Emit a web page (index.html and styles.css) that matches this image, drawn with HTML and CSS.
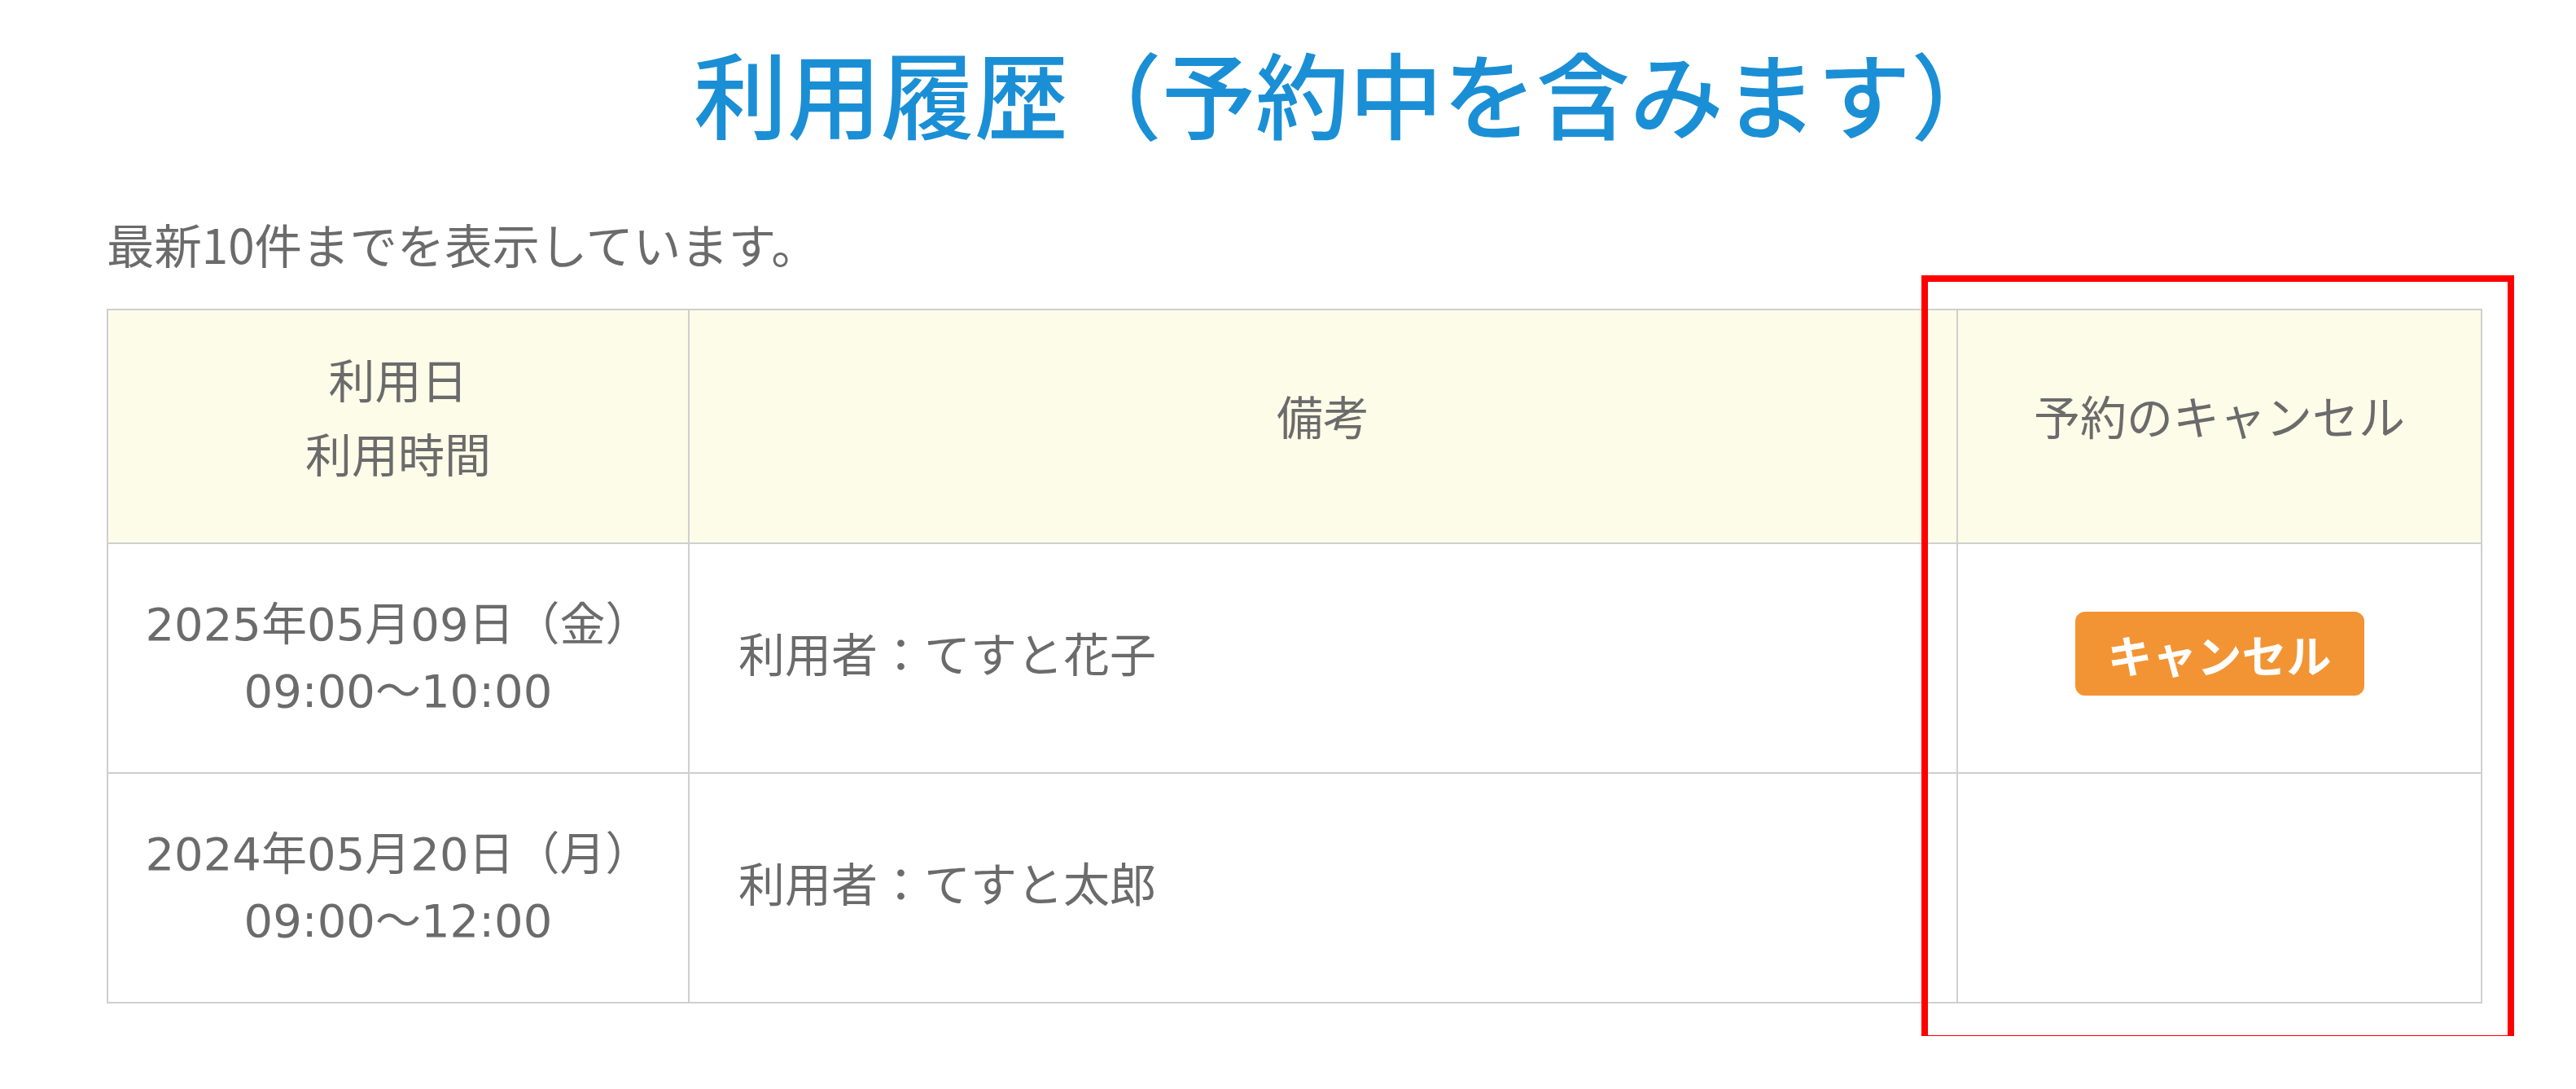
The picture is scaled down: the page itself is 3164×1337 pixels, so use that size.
FILE: index.html
```html
<!DOCTYPE html>
<html lang="ja">
<head>
<meta charset="utf-8">
<title>利用履歴</title>
<link rel="stylesheet" href="styles.css">
</head>
<body>
<div class="page">
  <h1 class="title">利用履歴（予約中を含みます）</h1>
  <p class="note">最新10件までを表示しています。</p>
  <table class="history">
    <colgroup>
      <col class="c-date">
      <col class="c-memo">
      <col class="c-cancel">
    </colgroup>
    <thead>
      <tr class="head-row">
        <th>利用日<br>利用時間</th>
        <th>備考</th>
        <th>予約のキャンセル</th>
      </tr>
    </thead>
    <tbody>
      <tr class="body-row">
        <td class="date">2025年05月09日（金）<br>09:00〜10:00</td>
        <td class="memo">利用者：てすと花子</td>
        <td class="cancel"><button class="cancel-btn" type="button">キャンセル</button></td>
      </tr>
      <tr class="body-row">
        <td class="date">2024年05月20日（月）<br>09:00〜12:00</td>
        <td class="memo">利用者：てすと太郎</td>
        <td class="cancel"></td>
      </tr>
    </tbody>
  </table>
  <div class="highlight"></div>
</div>
</body>
</html>
```

FILE: styles.css
```css
html, body {
  margin: 0;
  padding: 0;
  background: #ffffff;
}

body {
  font-family: "Noto Sans CJK JP", "Noto Sans", sans-serif;
  color: #6b6b6b;
}

.page {
  position: relative;
  padding: 46px 117px 40px 131px;
}

.title {
  margin: 0;
  font-size: 115px;
  line-height: 132px;
  font-weight: 500;
  color: #1b8fd5;
  text-align: center;
  padding-left: 136px;
}

.note {
  margin: 80px 0 0;
  font-size: 58.4px;
  line-height: 82px;
}

.history {
  margin-top: 39px;
  width: 2916px;
  border-collapse: collapse;
  table-layout: fixed;
  font-size: 57px;
}

.c-date { width: 714px; }
.c-memo { width: 1558px; }
.c-cancel { width: 644px; }

.history th,
.history td {
  border: 2px solid #cfcfcf;
  padding: 0;
  vertical-align: middle;
}

.history th {
  background: #fdfce9;
  font-weight: normal;
  line-height: 91px;
  text-align: center;
  padding-bottom: 28px;
}

.head-row { height: 287px; }
.body-row { height: 282px; }

.history td {
  line-height: 82px;
  padding-bottom: 12px;
}

.history td.date {
  text-align: center;
  font-family: "DejaVu Sans", "Noto Sans CJK JP", sans-serif;
  font-size: 56px;
  padding-top: 12px;
}

.history td.memo {
  padding-left: 60px;
  padding-bottom: 16px;
  text-align: left;
}

.cancel {
  text-align: center;
}

.cancel-btn {
  font-family: inherit;
  font-size: 55px;
  font-weight: bold;
  color: #ffffff;
  background: #f29433;
  border: none;
  border-radius: 12px;
  width: 355px;
  height: 103px;
  padding: 0;
  line-height: 103px;
  cursor: pointer;
}

.highlight {
  position: absolute;
  left: 2360px;
  top: 338px;
  width: 728px;
  height: 941px;
  box-sizing: border-box;
  border: 8px solid #ff0000;
  pointer-events: none;
}
```
